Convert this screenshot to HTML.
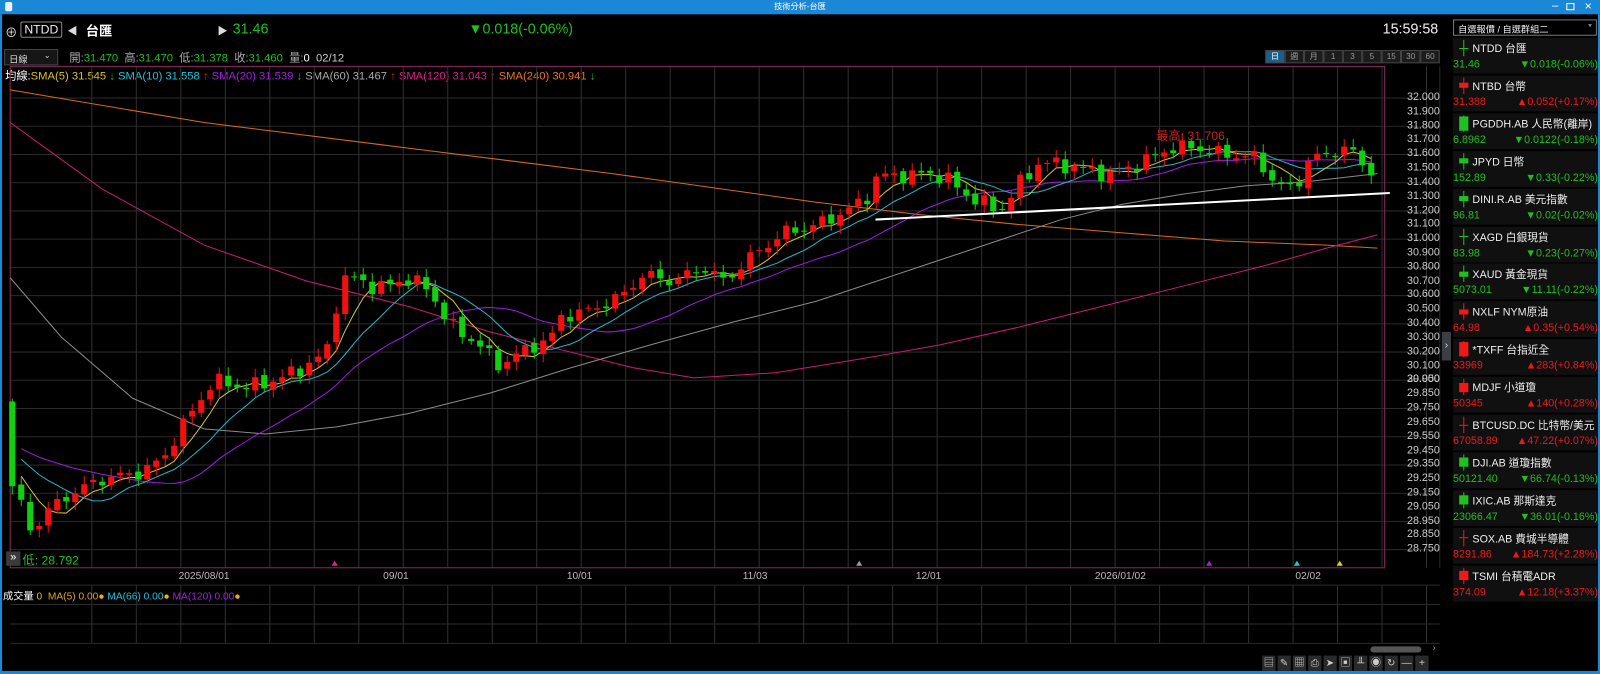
<!DOCTYPE html>
<html><head><meta charset="utf-8">
<style>
*{margin:0;padding:0;box-sizing:border-box}
html,body{width:1600px;height:674px;overflow:hidden;background:#000}
#w{position:absolute;left:0;top:0;width:1568px;height:660px;transform:scale(1.0204,1.0212);transform-origin:0 0;background:#000;font-family:"Liberation Sans","Noto Sans CJK TC",sans-serif;color:#ddd;overflow:hidden}
.a{position:absolute;white-space:nowrap}
.g{color:#1fc01f}.r{color:#f01818}.gy{color:#aaa}
</style></head><body><div id="w">
<div class="a" style="left:0;top:0;width:1568px;height:14px;background:#1a88d6"></div>
<div class="a" style="left:0;top:14px;width:2px;height:646px;background:#1a88d6"></div>
<div class="a" style="left:0;top:657px;width:1568px;height:3px;background:#1a88d6"></div>
<div class="a" style="left:1566px;top:14px;width:2px;height:646px;background:#1a88d6"></div>
<div class="a" style="left:5px;top:2px;width:7px;height:9px;border:1px solid #fff;border-radius:2px;background:#fff;opacity:.9"></div>
<div class="a" style="left:0;top:1px;width:1568px;text-align:center;font-size:8px;color:#fff">技術分析-台匯</div>
<div class="a" style="left:1521px;top:0px;font-size:11px;color:#fff">–</div>
<div class="a" style="left:1535px;top:3px;width:8px;height:7px;border:1px solid #fff"></div>
<div class="a" style="left:1553px;top:-1px;font-size:12px;color:#fff">×</div>
<div class="a" style="left:5px;top:23px;font-size:12px;color:#ddd">⊕</div>
<div class="a" style="left:20px;top:21px;width:41px;height:16px;border:1px solid #888;border-radius:2px;font-size:12px;color:#eee;text-align:center;line-height:14px">NTDD</div>
<div class="a" style="left:66px;top:22px;font-size:10px;color:#ddd">◀</div>
<div class="a" style="left:84px;top:20px;font-size:13px;color:#fff;font-weight:bold">台匯</div>
<div class="a" style="left:213px;top:22px;font-size:10px;color:#ddd">▶</div>
<div class="a g" style="left:228px;top:20px;font-size:14px">31.46</div>
<div class="a g" style="left:459px;top:20px;font-size:14px">▼0.018(-0.06%)</div>
<div class="a" style="left:1355px;top:20px;font-size:14px;color:#eee">15:59:58</div>
<div class="a" style="left:4px;top:48px;width:53px;height:16px;border:1px solid #444;background:#161616;font-size:9px;color:#ddd;padding:2px 4px">日線<span style="position:absolute;left:38px;top:1px;font-size:8px">⌄</span></div>
<div class="a" style="left:68px;top:48px;font-size:11px"><span class="gy">開:</span><span class="g">31.470</span> &nbsp;<span class="gy">高:</span><span class="g">31.470</span> &nbsp;<span class="gy">低:</span><span class="g">31.378</span> &nbsp;<span class="gy">收:</span><span class="g">31.460</span> &nbsp;<span class="gy">量:</span><span style="color:#fff">0</span> &nbsp;<span style="color:#ccc">02/12</span></div>
<div class="a" id="tf" style="left:1240px;top:49px;height:13px;display:flex;font-size:8px"></div>
<div class="a" style="left:5px;top:66px;font-size:11px"><span style="color:#fff">均線:</span><span style="color:#e0c020">SMA(5) 31.545</span><span class="g"> ↓ </span><span style="color:#20c0d8">SMA(10) 31.558</span><span class="r"> ↑ </span><span style="color:#a020e0">SMA(20) 31.539</span><span class="g"> ↓ </span><span style="color:#aaa">SMA(60) 31.467</span><span class="r"> ↑ </span><span style="color:#e0208a">SMA(120) 31.043</span><span class="r"> ↑ </span><span style="color:#f07020">SMA(240) 30.941</span><span class="g"> ↓</span></div>
<svg class="a" id="ch" style="left:0;top:0" width="1420" height="660"></svg>
<div class="a" style="left:1359px;top:0;width:52px;height:560px" id="ax"></div>
<div class="a" style="left:1133px;top:124px;font-size:12px;color:#c82020">最高: 31.706</div>
<div class="a" style="left:6px;top:540px;width:14px;height:14px;background:#3a3a3a;font-size:11px;color:#fff;text-align:center;line-height:13px">»</div>
<div class="a g" style="left:22px;top:540px;font-size:12px">低: 28.792</div>
<div class="a" style="left:3px;top:575px;font-size:10px"><span style="color:#fff">成交量</span> <span style="color:#e0c020">0</span> &nbsp;<span style="color:#e0a020">MA(5) 0.00</span><span style="color:#f0b000">●</span> <span style="color:#20c0d8">MA(66) 0.00</span><span style="color:#f0b000">●</span> <span style="color:#a020e0">MA(120) 0.00</span><span style="color:#f0b000">●</span></div>
<div class="a" style="left:1343px;top:633px;width:50px;height:6px;border-radius:3px;background:#555"></div>
<div class="a" style="left:1404px;top:629px;font-size:9px;color:#888">›</div>
<div class="a" id="tb" style="left:1237px;top:642px;display:flex;gap:2px"></div>
<div class="a" style="left:1413px;top:325px;width:9px;height:28px;background:#3a3f44;color:#ddd;font-size:10px;line-height:28px;text-align:center">›</div>
<div class="a" style="left:1424px;top:19px;width:141px;height:16px;border:1px solid #777;background:#000;font-size:9px;color:#eee;padding:2px 4px">自選報價 / 自選群組二<span style="position:absolute;right:4px;top:1px;color:#888;font-size:7px">▾</span></div>
<div id="rp"></div>
</div>
<script>
const NS='http://www.w3.org/2000/svg',svg=document.getElementById('ch');
function el(t,a){const e=document.createElementNS(NS,t);for(const k in a)e.setAttribute(k,a[k]);svg.appendChild(e);return e}
const Y=p=>96+(32-p)*138.2;
for(let p=32.0;p>=28.7;p-=0.2){const y=Y(p);el('line',{x1:10,x2:1411,y1:y,y2:y,stroke:'#2b2b2b','stroke-width':1});}
for(let x=90;x<1411;x+=43.6){el('line',{x1:x,x2:x,y1:65,y2:556,stroke:'#303030'});el('line',{x1:x,x2:x,y1:573,y2:630,stroke:'#303030'});}
el('line',{x1:1411,x2:1411,y1:65,y2:556,stroke:'#2b2b2b'});
for(let y=573;y<=630;y+=19)el('line',{x1:10,x2:1411,y1:y,y2:y,stroke:'#2b2b2b'});
el('rect',{x:10,y:65,width:1347,height:491,fill:'none',stroke:'#8a2a5e','stroke-width':1});
const ax=document.getElementById('ax');let h='';
for(let i=0;i<=20;i++){const p=32-i*0.1;h+=`<div class="a" style="right:0;top:${Y(p)-7}px;font-size:10.5px;color:#ccc">${p.toFixed(3)}</div>`}
for(let i=0;i<13;i++){const p=29.95-i*0.1;h+=`<div class="a" style="right:0;top:${Y(p+0.05)-7}px;font-size:10.5px;color:#ccc">${p.toFixed(3)}</div>`}
ax.innerHTML=h;
[['2025/08/01',200],['09/01',388],['10/01',568],['11/03',740],['12/01',910],['2026/01/02',1098],['02/02',1282]].forEach(d=>{const t=el('text',{x:d[1],y:567,fill:'#bbb','font-size':10,'text-anchor':'middle','font-family':'Liberation Sans'});t.textContent=d[0]});
[[328,'#e02090'],[842,'#999'],[1185,'#a020e0'],[1271,'#20c8e0'],[1313,'#e0d020']].forEach(m=>el('polygon',{points:`${m[0]-3},554 ${m[0]+3},554 ${m[0]},549`,fill:m[1]}));
const pl=(pts,c,w)=>el('polyline',{points:pts.map(p=>p.join(',')).join(' '),fill:'none',stroke:c,'stroke-width':w||1});
pl([[10,88],[200,120],[400,145],[600,170],[800,198],[900,210],[1000,220],[1100,228],[1200,236],[1300,240],[1350,243]],'#d86a20');
pl([[10,120],[100,185],[200,240],[300,275],[400,300],[480,325],[560,345],[620,360],[680,370],[760,365],[840,352],[920,338],[1000,320],[1080,300],[1160,280],[1240,260],[1300,243],[1350,230]],'#c81c70');
pl([[10,272],[60,330],[130,390],[200,420],[260,425],[330,418],[400,405],[480,385],[560,360],[640,337],[720,315],[800,295],[860,275],[920,255],[980,235],[1040,215],[1100,200],[1160,190],[1220,182],[1280,178],[1350,170]],'#8a8a8a');
const K=[[12,29.25],[22,29.1],[32,28.9],[42,29.05],[70,29.2],[100,29.3],[140,29.35],[160,29.45],[185,29.75],[210,30.0],[240,29.95],[270,30.0],[300,30.1],[320,30.2],[330,30.55],[340,30.75],[370,30.65],[400,30.72],[420,30.65],[440,30.4],[470,30.25],[490,30.1],[510,30.2],[540,30.3],[550,30.45],[580,30.5],[610,30.6],[630,30.75],[660,30.7],[690,30.8],[710,30.7],[740,30.9],[770,31.05],[800,31.1],[830,31.2],[850,31.3],[860,31.45],[890,31.45],[910,31.47],[930,31.42],[950,31.3],[980,31.2],[1000,31.4],[1020,31.55],[1060,31.5],[1090,31.45],[1120,31.55],[1150,31.65],[1170,31.65],[1200,31.6],[1230,31.58],[1250,31.4],[1270,31.35],[1280,31.55],[1300,31.6],[1320,31.65],[1345,31.47]];
function ip(x){for(let i=1;i<K.length;i++)if(x<=K[i][0]){const a=K[i-1],b=K[i];return a[1]+(b[1]-a[1])*(x-a[0])/(b[0]-a[0])}return K[K.length-1][1]}
const C=[],X=[];
for(let i=0;i<152;i++){const x=12+i*8.82;X.push(x);C.push(ip(x)+Math.sin(i*1.7)*0.035+Math.sin(i*3.1)*0.025)}
C[0]=29.25;
const O=C.map((c,i)=>i?C[i-1]+Math.sin(i*2.3)*0.015:29.85);
function sma(n,pad){return C.map((c,i)=>{let s=0,k=0;for(let j=i;j>i-n;j--){s+=j>=0?C[j]:pad;k++}return s/k})}
const L=(a,c)=>pl(a.map((v,i)=>[X[i],Y(v)]).slice(1),c);
L(sma(20,29.55),'#9a1ee0');L(sma(10,29.5),'#28b4c8');L(sma(5,29.4),'#d8c038');
for(let i=0;i<152;i++){const o=O[i],c=C[i],up=c>=o,col=up?'#f01010':'#10d010';const hi=Math.max(o,c)+0.02+Math.abs(Math.sin(i*5.3))*0.04,lo=Math.min(o,c)-0.02-Math.abs(Math.cos(i*4.1))*0.04;
el('line',{x1:X[i],x2:X[i],y1:Y(hi),y2:Y(lo),stroke:col});
const t=Y(Math.max(o,c)),b=Y(Math.min(o,c));el('rect',{x:X[i]-3,y:t,width:6,height:Math.max(1,b-t),fill:col});}
el('line',{x1:858,y1:215,x2:1362,y2:189,stroke:'#fff','stroke-width':2});
document.getElementById('tf').innerHTML=['日','週','月','1','3','5','15','30','60'].map((t,i)=>`<div style="width:19px;height:13px;border:1px solid #444;background:${i?'#1c1c1c':'#1a5f8c'};color:${i?'#999':'#fff'};text-align:center;line-height:11px">${t}</div>`).join('');
document.getElementById('tb').innerHTML=['▤','✎','▦','⎙','➤','▣','╨','◉','↻','—','+'].map(t=>`<div style="width:13px;height:15px;background:#2a2a2a;color:#ccc;font-size:10px;text-align:center;line-height:15px">${t}</div>`).join('');
const R=[['NTDD 台匯','31.46','▼0.018(-0.06%)',0,'d'],['NTBD 台幣','31.388','▲0.052(+0.17%)',1,'s'],['PGDDH.AB 人民幣(離岸)','6.8962','▼0.0122(-0.18%)',0,'b'],['JPYD 日幣','152.89','▼0.33(-0.22%)',0,'s'],['DINI.R.AB 美元指數','96.81','▼0.02(-0.02%)',0,'s'],['XAGD 白銀現貨','83.98','▼0.23(-0.27%)',0,'d'],['XAUD 黃金現貨','5073.01','▼11.11(-0.22%)',0,'s'],['NXLF NYM原油','64.98','▲0.35(+0.54%)',1,'s'],['*TXFF 台指近全','33969','▲283(+0.84%)',1,'b'],['MDJF 小道瓊','50345','▲140(+0.28%)',1,'m'],['BTCUSD.DC 比特幣/美元','67058.89','▲47.22(+0.07%)',1,'d'],['DJI.AB 道瓊指數','50121.40','▼66.74(-0.13%)',0,'m'],['IXIC.AB 那斯達克','23066.47','▼36.01(-0.16%)',0,'m'],['SOX.AB 費城半導體','8291.86','▲184.73(+2.28%)',1,'d'],['TSMI 台積電ADR','374.09','▲12.18(+3.37%)',1,'m']];
document.getElementById('rp').innerHTML=R.map((r,i)=>{const y=37+i*36.9,c=r[3]?'#f01818':'#1fc01f';const bh={d:1,s:5,m:9,b:14}[r[4]];
return `<div class="a" style="left:1424px;top:${y}px;width:142px;height:35px;background:#101010;overflow:hidden">
<div class="a" style="left:10px;top:2px;width:1px;height:16px;background:${c}"></div>
<div class="a" style="left:6px;top:${10-bh/2}px;width:9px;height:${bh}px;background:${c}"></div>
<div class="a" style="left:19px;top:3px;font-size:10.5px;color:#eee">${r[0]}</div>
<div class="a" style="left:0;top:20px;font-size:10.5px;color:${c}">${r[1]}</div>
<div class="a" style="right:0;top:20px;font-size:10.5px;color:${c}">${r[2]}</div></div>`}).join('');
</script>
</body></html>
